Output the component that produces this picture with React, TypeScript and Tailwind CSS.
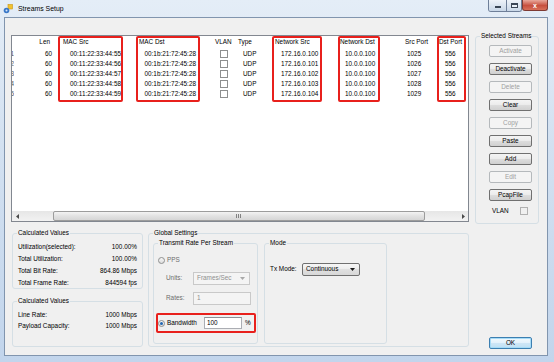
import React from "react";

type Stream = {
  id: number;
  len: number;
  macSrc: string;
  macDst: string;
  type: string;
  netSrc: string;
  netDst: string;
  srcPort: number;
  dstPort: number;
};

const streams: Stream[] = [0, 1, 2, 3, 4].map((i) => ({
  id: i + 1,
  len: 60,
  macSrc: `00:11:22:33:44:5${5 + i}`,
  macDst: "00:1b:21:72:45:28",
  type: "UDP",
  netSrc: `172.16.0.10${i}`,
  netDst: "10.0.0.100",
  srcPort: 1025 + i,
  dstPort: 556,
}));

const columns = [
  { key: "len", title: "Len", w: "w-[40px]", head: "justify-end pr-[4px]", cell: "justify-end pr-[2px]" },
  { key: "macSrc", title: "MAC Src", w: "w-[70px]", head: "pl-[9px]", cell: "justify-end pr-[3px]" },
  { key: "macDst", title: "MAC Dst", w: "w-[76px]", head: "pl-[15px]", cell: "justify-end pr-[4px]" },
  { key: "vlan", title: "VLAN", w: "w-[35px]", head: "pl-[15px]", cell: "pl-[20px]" },
  { key: "type", title: "Type", w: "w-[33px]", head: "pl-[3px]", cell: "pl-[8px]" },
  { key: "netSrc", title: "Network Src", w: "w-[62px]", head: "pl-[7px]", cell: "pl-[13px]" },
  { key: "netDst", title: "Network Dst", w: "w-[55px]", head: "pl-[10px]", cell: "pl-[15px]" },
  { key: "srcPort", title: "Src Port", w: "w-[47px]", head: "pl-[20px]", cell: "pl-[22px]" },
  { key: "dstPort", title: "Dst Port", w: "w-[36px]", head: "pl-[7px]", cell: "pl-[13px]" },
] as const;

// annotation boxes drawn over the list (offsets from list inner edge)
const marks = [
  "left-[46px] w-[65px]",
  "left-[124px] w-[64px]",
  "left-[260px] w-[50px]",
  "left-[326px] w-[42px]",
  "left-[425px] w-[29px]",
];

const selectedButtons = [
  { label: "Activate", disabled: true },
  { label: "Deactivate", disabled: false },
  { label: "Delete", disabled: true },
  { label: "Clear", disabled: false },
  { label: "Copy", disabled: true },
  { label: "Paste", disabled: false },
  { label: "Add", disabled: false },
  { label: "Edit", disabled: true },
  { label: "PcapFile", disabled: false },
];

function Btn({ label, disabled }: { label: string; disabled?: boolean }) {
  return (
    <div
      className={`w-[43px] h-[12px] shrink-0 rounded-[2px] border flex items-center justify-center leading-none ${
        disabled
          ? "border-[#b5b9bc] bg-[#f4f4f4] text-[#a0a0a0]"
          : "border-[#707070] bg-[linear-gradient(to_bottom,#f4f4f4_0%,#ebebeb_50%,#dddddd_50%,#d0d0d0_100%)] text-black"
      }`}
    >
      {label}
    </div>
  );
}

function GroupBox({
  label,
  className,
  children,
}: {
  label: string;
  className?: string;
  children?: React.ReactNode;
}) {
  return (
    <div className={`relative border border-[#d5dfe5] rounded-[3px] ${className ?? ""}`}>
      <span className="absolute -top-[5px] left-[4px] bg-[#f0f0f0] px-[1px] leading-[8px] whitespace-nowrap">
        {label}
      </span>
      {children}
    </div>
  );
}

function CheckBox({ disabled }: { disabled?: boolean }) {
  return (
    <div
      className={`w-[8px] h-[8px] border ${
        disabled ? "border-[#b1b1b1] bg-[#f0f0f0]" : "border-[#8e8f8f] bg-white"
      }`}
    />
  );
}

function Radio({ checked }: { checked?: boolean }) {
  return (
    <div className="w-[7px] h-[7px] rounded-full border border-[#8e8f8f] bg-[linear-gradient(to_bottom,#f6f6f6,#dedede)] flex items-center justify-center shrink-0">
      {checked && <div className="w-[3px] h-[3px] rounded-full bg-[#2267b3]" />}
    </div>
  );
}

function DownArrow({ color }: { color: string }) {
  return (
    <svg width="5" height="3" viewBox="0 0 5 3">
      <path d="M0 0H5L2.5 3z" fill={color} />
    </svg>
  );
}

function CalcRow({ label, value, h }: { label: string; value: string; h: string }) {
  return (
    <div className={`${h} flex items-center justify-between leading-none`}>
      <span>{label}</span>
      <span>{value}</span>
    </div>
  );
}

export default function App() {
  return (
    <div className="w-[554px] h-[362px] overflow-hidden flex flex-col bg-[linear-gradient(to_bottom,#e4edf7_0%,#d3e1f1_40%,#c2d5ec_100%)] font-['Liberation_Sans',Arial,sans-serif] text-[6.4px] text-black">
      {/* Title bar */}
      <div className="h-[17px] shrink-0 flex items-start">
        <svg width="10" height="10" viewBox="0 0 10 10" className="ml-[3px] mt-[4px]">
          <rect x="5" y="0.5" width="4.5" height="4.5" fill="#f2c230" stroke="#c89616" strokeWidth="0.6" />
          <circle cx="3.5" cy="6.5" r="2.8" fill="#3a78c8" />
          <circle cx="3.5" cy="6.5" r="1" fill="#dbe8f7" />
        </svg>
        <span className="ml-[5px] mt-[4px] text-[6.9px] leading-[9px]">Streams Setup</span>
        <div className="ml-auto mr-[6px] flex items-start">
          <div className="flex border border-t-0 border-[#6e7f99] rounded-b-[3px] overflow-hidden">
            <div className="w-[17px] h-[11px] bg-[linear-gradient(to_bottom,#eef3f9,#c9d7e8)] flex items-end justify-center pb-[3px]">
              <div className="w-[6px] h-[2px] bg-white border border-[#3a4656]" />
            </div>
            <div className="w-[15px] h-[11px] border-l border-[#6e7f99] bg-[linear-gradient(to_bottom,#eef3f9,#c9d7e8)] flex items-center justify-center">
              <div className="w-[7px] h-[5px] border border-[#3a4656] border-t-2 bg-[#e9f0f8]" />
            </div>
          </div>
          <div className="w-[26px] h-[11px] border border-t-0 border-[#7e3a33] rounded-b-[3px] bg-[linear-gradient(to_bottom,#e9a99c,#c7503f_55%,#d8705a)] flex items-center justify-center text-white font-bold text-[7px] leading-none">
            x
          </div>
        </div>
      </div>

      {/* Client area */}
      <div className="flex-1 ml-[4px] mr-[6px] mb-[6px] border border-[#8195ae] bg-[#f0f0f0] flex flex-col">
        <div className="flex items-start mt-[17px]">
          {/* Stream list */}
          <div className="ml-[6px] w-[458px] h-[187px] border border-[#828790] bg-white relative flex flex-col">
            <div className="h-[13px] flex items-stretch">
              <div className="w-[2px]" />
              {columns.map((c) => (
                <div key={c.key} className={`${c.w} ${c.head} flex items-center whitespace-nowrap leading-none`}>
                  {c.title}
                </div>
              ))}
            </div>
            {streams.map((s) => (
              <div key={s.id} className="h-[10px] flex items-stretch">
                <div className="w-[2px] overflow-hidden flex justify-end items-center leading-none text-[#555]">
                  <span className="shrink-0">{s.id}</span>
                </div>
                {columns.map((c) => (
                  <div key={c.key} className={`${c.w} ${c.cell} flex items-center whitespace-nowrap leading-none`}>
                    {c.key === "vlan" ? <CheckBox /> : String(s[c.key])}
                  </div>
                ))}
              </div>
            ))}
            <div className="flex-1" />
            {/* horizontal scrollbar */}
            <div className="h-[10px] flex bg-[linear-gradient(to_bottom,#e6e6e6,#f2f2f2)]">
              <div className="w-[10px] flex items-center justify-center">
                <svg width="3" height="5" viewBox="0 0 3 5">
                  <path d="M3 0L0 2.5L3 5z" fill="#4a4a4a" />
                </svg>
              </div>
              <div className="flex-1 flex items-stretch">
                <div className="ml-[31px] w-[372px] border border-[#9c9c9c] rounded-[2px] bg-[linear-gradient(to_bottom,#f3f3f3,#e2e2e2_50%,#d6d6d6)] flex items-center justify-center">
                  <svg width="6" height="4" viewBox="0 0 6 4">
                    <path d="M0.5 0V4M2.5 0V4M4.5 0V4" stroke="#6a6a6a" strokeWidth="0.8" />
                  </svg>
                </div>
              </div>
              <div className="w-[10px] flex items-center justify-center">
                <svg width="3" height="5" viewBox="0 0 3 5">
                  <path d="M0 0L3 2.5L0 5z" fill="#4a4a4a" />
                </svg>
              </div>
            </div>
            {marks.map((m) => (
              <div key={m} className={`absolute top-0 h-[66px] ${m} border-2 border-[#e8201c] rounded-[2px]`} />
            ))}
          </div>

          {/* Selected Streams */}
          <GroupBox label="Selected Streams" className="ml-[6px] mt-[1px] w-[64px] h-[188px]">
            <div className="flex flex-col gap-[6px] pl-[13px] pt-[8px]">
              {selectedButtons.map((b) => (
                <Btn key={b.label} label={b.label} disabled={b.disabled} />
              ))}
              <div className="h-[8px] flex items-center pl-[3px]">
                <span className="leading-none">VLAN</span>
                <div className="ml-[11px]">
                  <CheckBox disabled />
                </div>
              </div>
            </div>
          </GroupBox>
        </div>

        <div className="flex items-start mt-[9px]">
          {/* Calculated values */}
          <div className="ml-[7px] w-[131px] flex flex-col">
            <GroupBox label="Calculated Values" className="h-[56px]">
              <div className="pt-[7px] px-[5px]">
                <CalcRow h="h-[12px]" label="Utilization(selected):" value="100.00%" />
                <CalcRow h="h-[12px]" label="Total Utilization:" value="100.00%" />
                <CalcRow h="h-[12px]" label="Total Bit Rate:" value="864.86 Mbps" />
                <CalcRow h="h-[12px]" label="Total Frame Rate:" value="844594 fps" />
              </div>
            </GroupBox>
            <GroupBox label="Calculated Values" className="mt-[12px] h-[46px]">
              <div className="pt-[8px] px-[5px]">
                <CalcRow h="h-[11px]" label="Line Rate:" value="1000 Mbps" />
                <CalcRow h="h-[11px]" label="Payload Capacity:" value="1000 Mbps" />
              </div>
            </GroupBox>
          </div>

          {/* Global settings */}
          <GroupBox label="Global Settings" className="ml-[5px] w-[321px] h-[114px]">
            <div className="flex items-start pt-[9px] pl-[4px]">
              <GroupBox label="Transmit Rate Per Stream" className="w-[105px] h-[101px]">
                <div className="flex flex-col pl-[4px] pt-[10px]">
                  <div className="h-[12px] flex items-center">
                    <Radio />
                    <span className="ml-[2px] leading-none text-[#6d6d6d]">PPS</span>
                  </div>
                  <div className="mt-[6px] h-[13px] flex items-center pl-[8px]">
                    <span className="w-[27px] leading-none text-[#6d6d6d]">Units:</span>
                    <div className="w-[57px] h-full border border-[#c9c9c9] bg-[#f4f4f4] flex items-center justify-between pl-[3px] pr-[4px] text-[#8f8f8f] leading-none">
                      <span>Frames/Sec</span>
                      <DownArrow color="#a8a8a8" />
                    </div>
                  </div>
                  <div className="mt-[7px] h-[13px] flex items-center pl-[8px]">
                    <span className="w-[27px] leading-none text-[#6d6d6d]">Rates:</span>
                    <div className="w-[58px] h-full border border-[#c9c9c9] bg-[#f4f4f4] flex items-center pl-[3px] text-[#8f8f8f] leading-none">
                      1
                    </div>
                  </div>
                  <div className="mt-[12px] h-[12px] flex items-center">
                    <Radio checked />
                    <span className="ml-[2px] w-[37px] leading-none">Bandwidth</span>
                    <div className="w-[38px] h-full border border-[#abadb3] border-t-[#8d9096] bg-white flex items-center pl-[2px] leading-none">
                      100
                    </div>
                    <span className="ml-[3px] leading-none">%</span>
                  </div>
                </div>
                <div className="absolute left-[2px] top-[69px] w-[100px] h-[20px] border-2 border-[#e8201c] rounded-[2px]" />
              </GroupBox>

              <GroupBox label="Mode" className="ml-[6px] w-[123px] h-[101px]">
                <div className="pt-[19px] pl-[5px] flex items-center">
                  <span className="w-[32px] leading-none">Tx Mode:</span>
                  <div className="w-[58px] h-[13px] rounded-[2px] border border-[#707070] bg-[linear-gradient(to_bottom,#f6f6f6,#ececec_50%,#e0e0e0_50%,#d8d8d8)] flex items-center justify-between pl-[3px] pr-[4px] leading-none">
                    <span>Continuous</span>
                    <DownArrow color="#1a1a1a" />
                  </div>
                </div>
              </GroupBox>
            </div>
          </GroupBox>

          <div className="ml-[20px] mt-[104px] w-[43px] h-[12px] rounded-[2px] border border-[#3c7fb1] bg-[linear-gradient(to_bottom,#f2f9fd,#e3f1fb_50%,#cfe6f6_50%,#bee0f4)] shadow-[inset_0_0_0_1px_#a6dbf7] flex items-center justify-center leading-none">
            OK
          </div>
        </div>
      </div>
    </div>
  );
}
